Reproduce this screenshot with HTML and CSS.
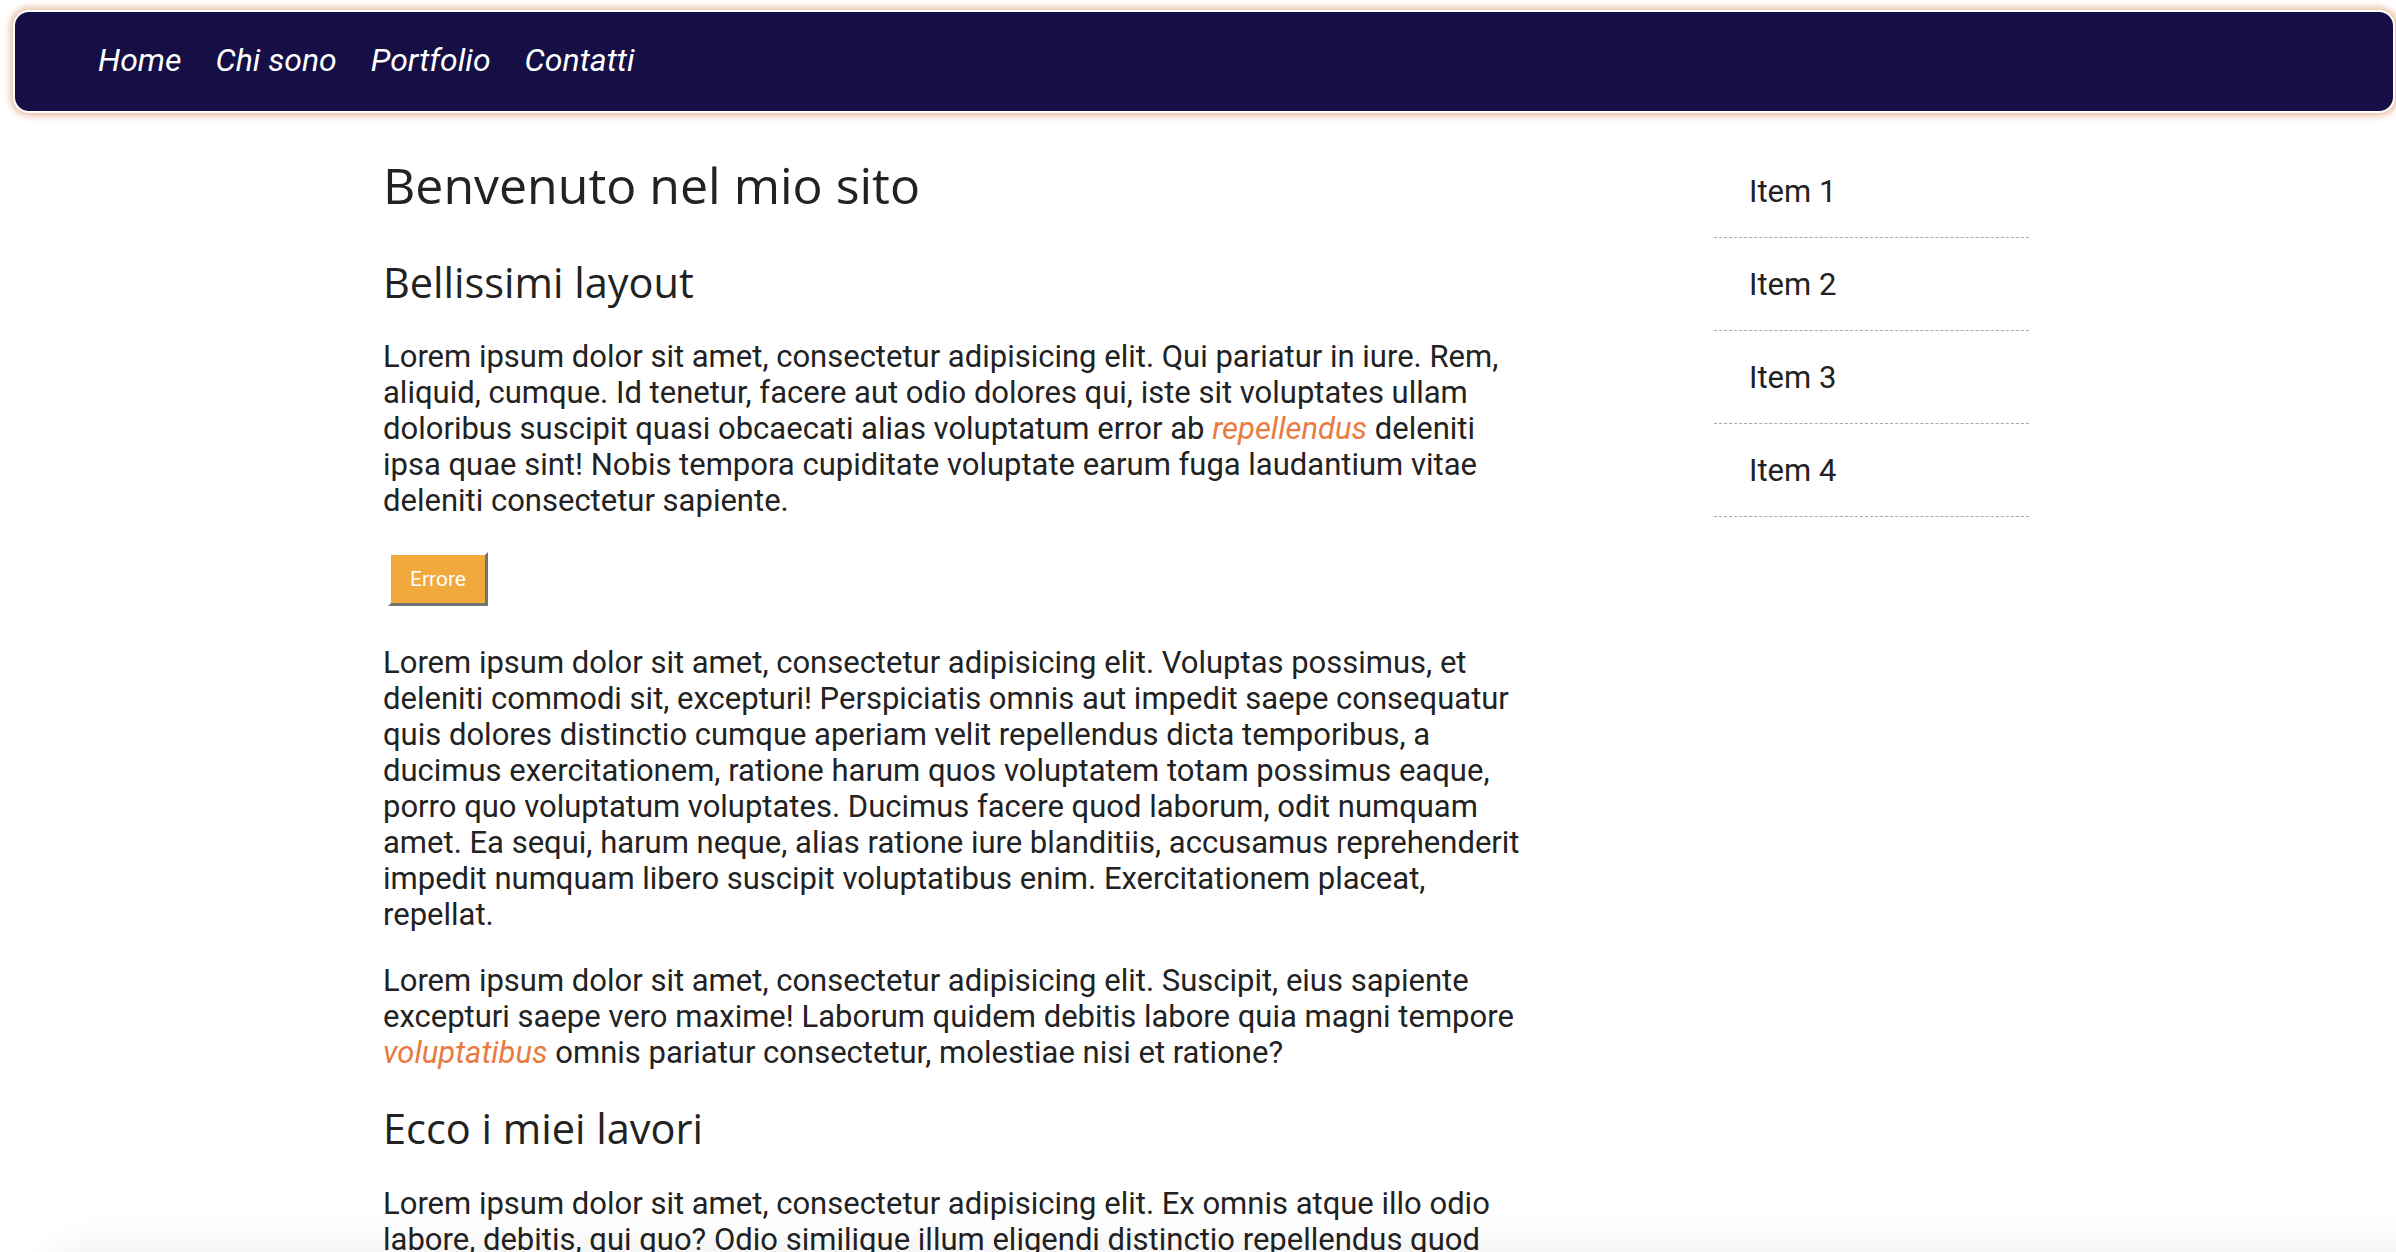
FILE: index.html
```html
<!DOCTYPE html>
<html lang="it">
<head>
<meta charset="utf-8">
<title>Benvenuto nel mio sito</title>
<link rel="stylesheet" href="styles.css">
</head>
<body>
<header class="topbar">
  <nav class="menu">
    <a href="#" class="menu-link">Home</a>
    <a href="#" class="menu-link">Chi sono</a>
    <a href="#" class="menu-link">Portfolio</a>
    <a href="#" class="menu-link">Contatti</a>
  </nav>
</header>
<div class="page">
  <main class="content">
    <h1 class="title">Benvenuto nel mio sito</h1>
    <h2 class="subtitle">Bellissimi layout</h2>
    <p class="text">Lorem ipsum dolor sit amet, consectetur adipisicing elit. Qui pariatur in iure. Rem, aliquid, cumque. Id tenetur, facere aut odio dolores qui, iste sit voluptates ullam doloribus suscipit quasi obcaecati alias voluptatum error ab <a href="#" class="accent">repellendus</a> deleniti ipsa quae sint! Nobis tempora cupiditate voluptate earum fuga laudantium vitae deleniti consectetur sapiente.</p>
    <div class="actions"><button class="btn">Errore</button></div>
    <p class="text">Lorem ipsum dolor sit amet, consectetur adipisicing elit. Voluptas possimus, et deleniti commodi sit, excepturi! Perspiciatis omnis aut impedit saepe consequatur quis dolores distinctio cumque aperiam velit repellendus dicta temporibus, a ducimus exercitationem, ratione harum quos voluptatem totam possimus eaque, porro quo voluptatum voluptates. Ducimus facere quod laborum, odit numquam amet. Ea sequi, harum neque, alias ratione iure blanditiis, accusamus reprehenderit impedit numquam libero suscipit voluptatibus enim. Exercitationem placeat, repellat.</p>
    <p class="text">Lorem ipsum dolor sit amet, consectetur adipisicing elit. Suscipit, eius sapiente excepturi saepe vero maxime! Laborum quidem debitis labore quia magni tempore <a href="#" class="accent">voluptatibus</a> omnis pariatur consectetur, molestiae nisi et ratione?</p>
    <h2 class="subtitle subtitle-second">Ecco i miei lavori</h2>
    <p class="text">Lorem ipsum dolor sit amet, consectetur adipisicing elit. Ex omnis atque illo odio labore, debitis, qui quo? Odio similique illum eligendi distinctio repellendus quod vero dolorem, cumque nesciunt aspernatur porro, fugit minima ut harum.</p>
  </main>
  <aside class="sidebar">
    <ul class="side-list">
      <li class="side-item">Item 1</li>
      <li class="side-item">Item 2</li>
      <li class="side-item">Item 3</li>
      <li class="side-item">Item 4</li>
    </ul>
  </aside>
</div>
<div class="bottom-shade"></div>
</body>
</html>
```

FILE: styles.css
```css
html, body {
  margin: 0;
  padding: 0;
  background: #ffffff;
}

body {
  font-family: Roboto, "Liberation Sans", sans-serif;
  color: #222222;
  overflow: hidden;
  height: 1252px;
}

.topbar {
  margin: 10px 1px 0 13px;
  box-sizing: border-box;
  height: 103px;
  background: #150f45;
  border: 2px solid #ffffff;
  border-radius: 16px;
  box-shadow: 0 0 6px 3px rgba(222, 150, 108, 0.6);
  display: flex;
  align-items: center;
  padding: 0 0 3px 83px;
}

.menu {
  display: flex;
  gap: 34px;
}

.menu-link {
  color: #ffffff;
  font-style: italic;
  font-size: 32px;
  text-decoration: none;
  line-height: 38px;
}

.page {
  display: grid;
  grid-template-columns: 1140px 315px;
  column-gap: 191px;
  justify-content: center;
  padding-left: 16px;
  margin-top: 38.5px;
}

.title {
  font-family: "Open Sans", "Noto Sans", sans-serif;
  font-weight: 400;
  font-size: 50px;
  line-height: 67px;
  margin: 0 0 35px;
  color: #222222;
}

.subtitle {
  font-family: "Open Sans", "Noto Sans", sans-serif;
  font-weight: 400;
  font-size: 41.5px;
  margin: 0 0 29.5px;
  color: #222222;
}

.subtitle-second {
  margin-top: -2px;
  margin-bottom: 30px;
}

.text {
  font-size: 31px;
  line-height: 36px;
  margin: 0 0 30.5px;
}

.accent {
  color: #e97b40;
  font-style: italic;
  text-decoration: none;
}

.actions {
  margin: 33px 0 38.5px 5px;
}

.btn {
  display: block;
  font-family: Roboto, "Liberation Sans", sans-serif;
  font-size: 21px;
  line-height: 24px;
  color: #ffffff;
  background: #f1a93d;
  padding: 12px 19px;
  border: 3px solid;
  border-color: #ffffff #727272 #727272 #ffffff;
  cursor: pointer;
}

.sidebar {
  margin-top: -6.5px;
}

.side-list {
  list-style: none;
  margin: 0;
  padding: 0;
}

.side-item {
  font-size: 31px;
  line-height: 45px;
  padding: 24px 35px 23px;
  border-bottom: 1px dashed #a9a9a9;
}

.bottom-shade {
  position: fixed;
  left: 40px;
  right: -40px;
  bottom: -60px;
  height: 60px;
  border-radius: 60px 0 0 0;
  box-shadow: 0 0 40px 6px rgba(0, 0, 0, 0.07);
  background: #ffffff;
}
```
